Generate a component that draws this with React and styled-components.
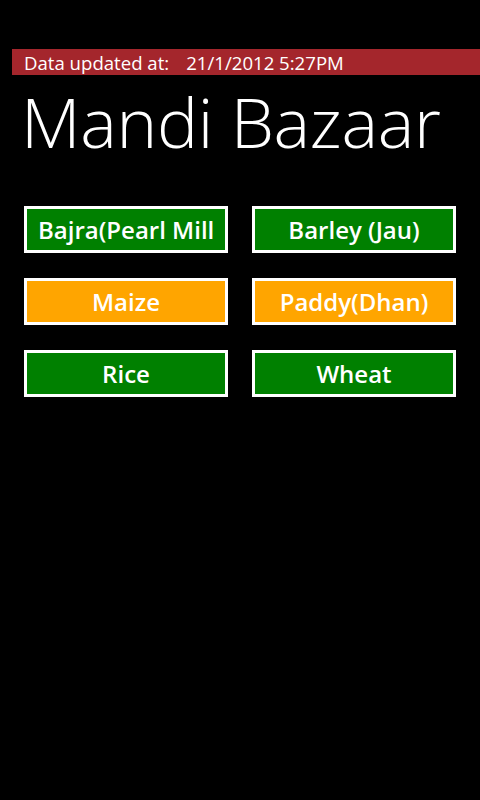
import React from "react"
import styled, { createGlobalStyle } from "styled-components"

const GlobalStyle = createGlobalStyle`
  html, body {
    margin: 0;
    padding: 0;
    background: #000;
    color: #fff;
    font-family: "Open Sans", "Noto Sans", sans-serif;
  }
`

const Page = styled.div`
  box-sizing: border-box;
  height: 800px;
  overflow: hidden;
  padding-top: 49px;
  background: #000;
`

const UpdateBar = styled.div`
  margin-left: 12px;
  height: 26px;
  background: #a4262c;
  display: flex;
  align-items: center;
  padding-left: 12px;
  font-size: 18.6px;
  color: #fff;
  white-space: nowrap;
`

const UpdateLabel = styled.span`
  margin-right: 17px;
`

const Title = styled.h1`
  margin: 0 0 0 21px;
  font-size: 69px;
  font-weight: 300;
  line-height: 1;
  padding-top: 12px;
  letter-spacing: -0.3px;
`

const Grid = styled.div`
  display: grid;
  grid-template-columns: 204px 204px;
  column-gap: 24px;
  row-gap: 25px;
  margin: 50px 0 0 24px;
`

const CropButton = styled.button`
  box-sizing: border-box;
  height: 47px;
  border: 3px solid #fff;
  background: ${p => (p.$tone === "orange" ? "#ffa500" : "#008000")};
  color: #fff;
  font-family: "Open Sans", "Noto Sans", sans-serif;
  font-weight: 600;
  font-size: 24px;
  padding: 0 11px;
  text-align: center;
  white-space: nowrap;
  overflow: hidden;
  display: block;
`

const ButtonText = styled.span`
  display: block;
  overflow: hidden;
  text-align: center;
`

const crops = [
  { name: "Bajra(Pearl Millet)", tone: "green" },
  { name: "Barley (Jau)", tone: "green" },
  { name: "Maize", tone: "orange" },
  { name: "Paddy(Dhan)", tone: "orange" },
  { name: "Rice", tone: "green" },
  { name: "Wheat", tone: "green" },
]

export default function App() {
  return (
    <Page>
      <GlobalStyle />
      <UpdateBar>
        <UpdateLabel>Data updated at:</UpdateLabel>
        <span>21/1/2012 5:27PM</span>
      </UpdateBar>
      <Title>Mandi Bazaar</Title>
      <Grid>
        {crops.map(c => (
          <CropButton key={c.name} $tone={c.tone}>
            <ButtonText>{c.name}</ButtonText>
          </CropButton>
        ))}
      </Grid>
    </Page>
  )
}
